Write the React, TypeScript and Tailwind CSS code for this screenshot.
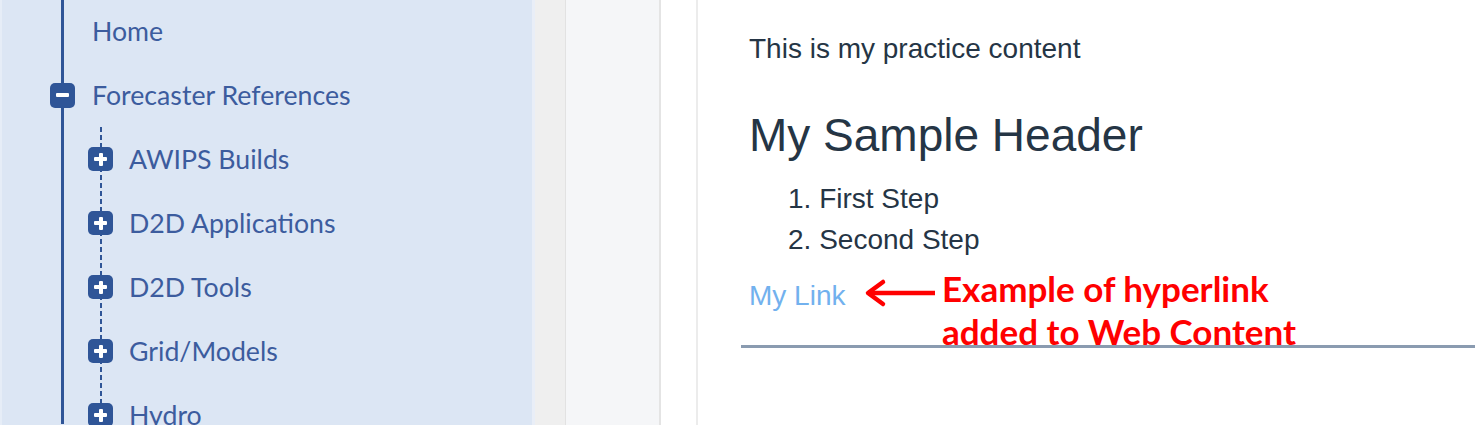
import { Fragment } from 'react'

const children = ['AWIPS Builds', 'D2D Applications', 'D2D Tools', 'Grid/Models', 'Hydro']

function PlusBox() {
  return (
    <div className="relative flex h-[24px] w-[25px] shrink-0 items-center justify-center rounded-[5px] bg-[#2f5597]">
      <div className="absolute h-[4px] w-[13px] rounded-[1px] bg-white" />
      <div className="absolute h-[13px] w-[4px] rounded-[1px] bg-white" />
    </div>
  )
}

function MinusBox() {
  return (
    <div className="flex h-[25px] w-[25px] shrink-0 items-center justify-center rounded-[5px] bg-[#2f5597]">
      <div className="h-[4px] w-[13px] rounded-[1px] bg-white" />
    </div>
  )
}

export default function App() {
  return (
    <div className="flex h-[425px] w-[1475px] overflow-hidden bg-white">
      {/* Tree sidebar */}
      <aside className="w-[532px] shrink-0 border-l-2 border-[#e6edf7] bg-[#dce6f4] font-['Lato',sans-serif] text-[26.7px] text-[#3c5c9e]">
        <div className="ml-[59px] h-full border-l-[3px] border-[#2f5597]">
          <div className="-mt-px flex h-16 items-center pl-[28px]">Home</div>
          <div className="-ml-[14px] flex h-16 items-center gap-[17px]">
            <MinusBox />
            <span>Forecaster References</span>
          </div>
          <div className="bg-[linear-gradient(#2f5597_5px,transparent_5px)] bg-[length:2px_8px] bg-[position:36px_0] bg-repeat-y">
            {children.map((c) => (
              <Fragment key={c}>
                <div className="flex h-16 items-center gap-[16px] pl-[24px]">
                  <PlusBox />
                  <span>{c}</span>
                </div>
              </Fragment>
            ))}
          </div>
        </div>
      </aside>

      {/* Panel gutters */}
      <div className="w-[3px] shrink-0 bg-[#e9eef7]" />
      <div className="w-[31px] shrink-0 border-r border-[#e2e2e2] bg-[#efefef]" />
      <div className="w-[95px] shrink-0 border-r-2 border-[#e4e4e4] bg-[#f5f6f8]" />
      <div className="w-[37px] shrink-0 border-r-2 border-[#ececec] bg-white" />

      {/* Web content */}
      <main className="flex-1 pl-[51px] pt-[29px] font-['Liberation_Sans',Arial,sans-serif] text-[28px] text-[#253545]">
        <p className="leading-[40px]">This is my practice content</p>
        <h2 className="mt-[39px] text-[46px] leading-[54px]">My Sample Header</h2>
        <ol className="mt-[16px] list-inside list-decimal pl-[39px] leading-[41px]">
          <li>First Step</li>
          <li>Second Step</li>
        </ol>
        <div className="relative mt-[16px] leading-[40px]">
          <a className="text-[#72b1ee]">My Link</a>
          <div className="absolute left-[115px] top-[2px]">
            <svg width="74" height="30" viewBox="0 0 74 30" fill="none">
              <path d="M4 15 H71" stroke="#ff0000" strokeWidth="4.5" />
              <path d="M19 4 L4 15 L19 26" stroke="#ff0000" strokeWidth="4.5" strokeLinecap="round" strokeLinejoin="round" />
            </svg>
          </div>
          <div className="absolute left-[193px] top-[-9px] z-10 whitespace-nowrap font-['Lato',sans-serif] text-[35px] font-bold leading-[43px] text-[#ff0000]">
            <div>Example of hyperlink</div>
            <div>added to Web Content</div>
          </div>
        </div>
        <div className="-ml-[8px] mt-[29px] h-[3px] bg-[#8a9bb0]" />
      </main>
    </div>
  )
}
